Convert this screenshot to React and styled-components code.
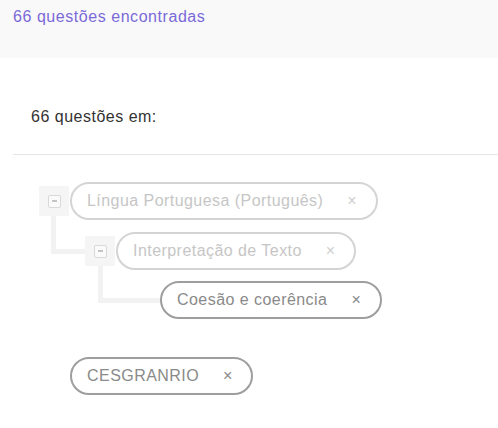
import React from "react";
import styled, { createGlobalStyle } from "styled-components";

const GlobalStyle = createGlobalStyle`
  body {
    margin: 0;
    background: #fff;
    font-family: "Liberation Sans", Arial, sans-serif;
  }
`;

const Header = styled.div`
  height: 58px;
  box-sizing: border-box;
  padding: 8px 13px;
  background-color: #f9f9f9;
  color: #7a6ad8;
  font-size: 16px;
  letter-spacing: 0.55px;
`;

const Summary = styled.div`
  padding: 50px 31px 0;
  color: #333;
  font-size: 16px;
  line-height: 18px;
  letter-spacing: 0.5px;
`;

const Divider = styled.hr`
  margin: 28px 0 0 13px;
  border: 0;
  border-top: 1px solid #e6e6e6;
`;

const Tree = styled.div`
  margin-top: 27px;
  padding-left: 39px;
`;

const Row = styled.div`
  display: flex;
  align-items: center;
  gap: 1px;
  position: relative;
  z-index: 1;
`;

const Children = styled.div`
  position: relative;
  margin-left: 46px;
  margin-top: ${(p) => p.$top || 12}px;

  &::before {
    content: "";
    position: absolute;
    left: ${(p) => p.$lineLeft || -34}px;
    top: -16px;
    width: ${(p) => p.$lineWidth || 34}px;
    height: 33px;
    border-left: 5px solid #f2f2f2;
    border-bottom: 5px solid #f2f2f2;
    z-index: 0;
  }
`;

const ToggleBox = styled.div`
  width: 30px;
  height: 30px;
  display: flex;
  align-items: center;
  justify-content: center;
  background-color: #f5f5f5;
`;

const Minus = styled.span`
  width: 11px;
  height: 11px;
  border: 1px solid #d9d9d9;
  border-radius: 2px;
  background: #fafafa;
  display: flex;
  align-items: center;
  justify-content: center;

  &::after {
    content: "";
    width: 5px;
    height: 2px;
    background: #c4c4c4;
  }
`;

const Spacer = styled.div`
  width: 28px;
`;

const Chip = styled.div`
  height: 38px;
  box-sizing: border-box;
  display: inline-flex;
  align-items: center;
  padding: 0 19px 0 15px;
  border: 2px solid ${(p) => (p.$faded ? "#d4d4d4" : "#9e9e9e")};
  border-radius: 20px;
  background: #fff;
  color: ${(p) => (p.$faded ? "#c6c6c6" : "#8a8a8a")};
  font-size: 16px;
  letter-spacing: 0.45px;
  white-space: nowrap;
`;

const Close = styled.span`
  margin-left: 24px;
  font-size: 16px;
  letter-spacing: 0;
  color: ${(p) => (p.$faded ? "#cfcfcf" : "#8a8a8a")};
`;

const Filters = styled.div`
  margin-top: 38px;
  padding-left: 70px;
`;

const Toggle = () => (
  <ToggleBox>
    <Minus />
  </ToggleBox>
);

export default function App() {
  return (
    <>
      <GlobalStyle />
      <Header>66 questões encontradas</Header>
      <Summary>66 questões em:</Summary>
      <Divider />
      <Tree>
        <Row>
          <Toggle />
          <Chip $faded>
            Língua Portuguesa (Português)<Close $faded>×</Close>
          </Chip>
        </Row>
        <Children>
          <Row>
            <Toggle />
            <Chip $faded>
              Interpretação de Texto<Close $faded>×</Close>
            </Chip>
          </Row>
          <Children $top={11} $lineLeft={-33} $lineWidth={62}>
            <Row>
              <Spacer />
              <Chip>
                Coesão e coerência<Close>×</Close>
              </Chip>
            </Row>
          </Children>
        </Children>
      </Tree>
      <Filters>
        <Chip>
          CESGRANRIO<Close>×</Close>
        </Chip>
      </Filters>
    </>
  );
}
